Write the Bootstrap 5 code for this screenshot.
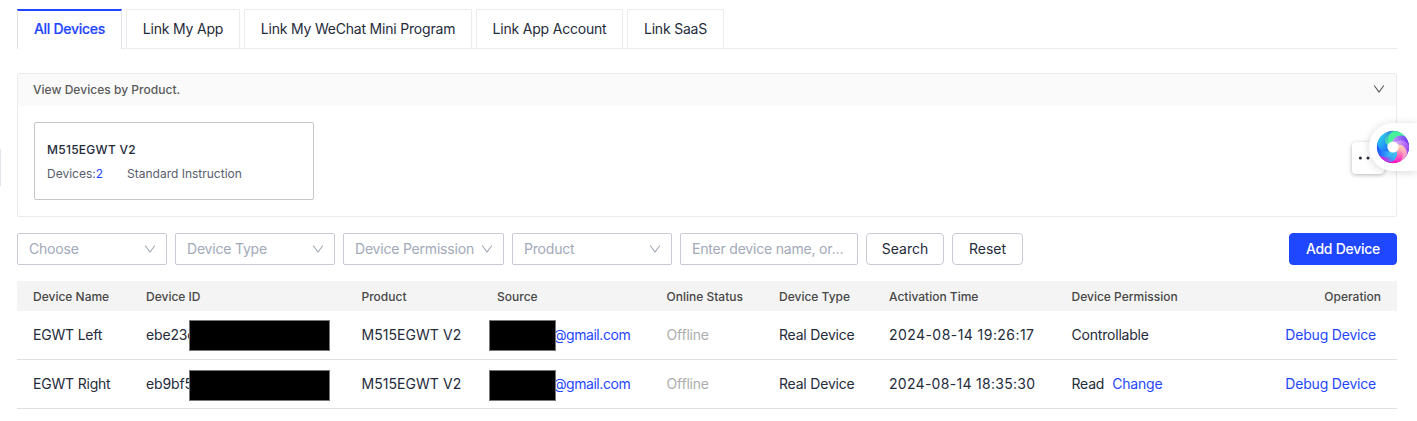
<!DOCTYPE html>
<html lang="en">
<head>
<meta charset="utf-8">
<meta name="viewport" content="width=device-width, initial-scale=1">
<title>Devices</title>
<link href="https://cdn.jsdelivr.net/npm/bootstrap@5.3.0/dist/css/bootstrap.min.css" rel="stylesheet">
<style>
:root { --brand: #1f47ff; --ink: #252b3a; --muted: #a2a9b8; --line: #ebebef; --field: #c8cad4; }
body { font-family: Inter, sans-serif; font-size: 14px; line-height: 22px; letter-spacing: -.2px; color: var(--ink); background: #fff; overflow: hidden; height: 421px; }
.page { padding: 9px 20px 0 17px; }
a { color: var(--brand); text-decoration: none; }
.nav-tabs.device-tabs { gap: 4px; border-bottom: 1px solid var(--line); height: 40px; flex-wrap: nowrap; }
.device-tabs .nav-link { height: 39px; margin: 0; padding: 8px 0 0; border: 1px solid var(--line); border-bottom: 0; border-radius: 2px 2px 0 0; color: var(--ink); text-align: center; white-space: nowrap; }
.device-tabs .nav-link.active { height: 40px; padding-top: 7px; border-top: 2px solid var(--brand); border-radius: 0; color: var(--brand); font-weight: 500; letter-spacing: -.28px; -webkit-text-stroke: .2px; }
.t1 { width: 105px } .t2 { width: 114px } .t3 { width: 228px } .t4 { width: 147px } .t5 { width: 97px }
.panel { margin-top: 24px; height: 144px; border: 1px solid var(--line); border-radius: 2px; }
.panel-head { height: 32px; padding: 0 11px 0 15px; background: #fafafa; font-size: 12px; font-weight: 500; letter-spacing: .03px; color: #595959; }
.product-box { width: 280px; height: 78px; margin: 16px 0 0 16px; padding: 16px 12px; border: 1px solid #c6c6ca; border-radius: 2px; font-size: 12px; letter-spacing: 0; }
.product-box strong { font-weight: 500; display: block; line-height: 22px; letter-spacing: .27px; }
.product-box div { color: #575d6c; line-height: 26px; }
.filters { margin-top: 16px; gap: 8px; }
.field { height: 32px; padding: 0 10px 0 11px; border: 1px solid var(--field); border-radius: 2px; color: var(--muted); white-space: nowrap; }
.f1 { width: 150px } .f2 { width: 160px } .f3 { width: 161px } .f4 { width: 160px } .f5 { width: 178px }
.filters .btn { height: 32px; padding: 0; font-size: 14px; line-height: 30px; border-radius: 4px; border-color: var(--field); color: var(--ink); }
.filters .btn-brand { width: 108px; background: var(--brand); border-color: var(--brand); color: #fff; font-weight: 500; letter-spacing: -.27px; }
.b1 { width: 78px } .b2 { width: 71px }
.device-table { table-layout: fixed; width: 1380px; margin: 16px 0 0; border-collapse: separate; border-spacing: 0; color: var(--ink); white-space: nowrap; }
.device-table th { height: 30px; padding: 1px 16px 0; background: #f4f4f4; font-size: 12px; font-weight: 500; letter-spacing: 0; color: #474747; border: 0; vertical-align: middle; line-height: 22px; }
.device-table td { height: 49px; padding: 0 16px; border-bottom: 1px solid #e0e0e0; vertical-align: middle; position: relative; background: none; color: inherit; }
.device-table td.offline { color: #adadad; }
.device-table td.op { padding-right: 21px; }
.device-table td.model { letter-spacing: .05px; }
.device-table td.ident { letter-spacing: -.15px; }
.device-table td.stamp { letter-spacing: .44px; }
.device-table tr + tr td.stamp { letter-spacing: .29px; }
.mail { margin-left: 56px; letter-spacing: -.45px; }
.redact { position: absolute; top: 9px; height: 31px; background: #000; border: 1px solid #777; }
tr + tr .redact { top: 10px; }
.redact-id { left: 59px; width: 141px; }
.redact-src { left: 8px; width: 67px; }
.more-btn { position: absolute; left: 1352px; top: 142px; width: 32px; height: 32px; padding: 0; border-radius: 4px; background: #fff; box-shadow: 0 1px 4px rgba(0,0,0,.3); }
.helper { position: absolute; left: 1369px; top: 123px; width: 48px; height: 48px; border-radius: 24px 0 0 24px; background: #fff; box-shadow: 0 1px 8px rgba(0,0,0,.16); }
.drawer-edge { position: absolute; left: 0; top: 149px; width: 1px; height: 37px; background: #e4e5ec; }
</style>
</head>
<body class="position-relative">
<main class="page">
  <ul class="nav nav-tabs device-tabs">
    <li class="nav-item"><a class="nav-link active t1" href="#">All Devices</a></li>
    <li class="nav-item"><a class="nav-link t2" href="#">Link My App</a></li>
    <li class="nav-item"><a class="nav-link t3" href="#">Link My WeChat Mini Program</a></li>
    <li class="nav-item"><a class="nav-link t4" href="#">Link App Account</a></li>
    <li class="nav-item"><a class="nav-link t5" href="#">Link SaaS</a></li>
  </ul>

  <section class="panel">
    <div class="panel-head d-flex justify-content-between align-items-center">
      <span>View Devices by Product.</span>
      <svg width="12" height="10" viewBox="0 0 12 10" fill="none" stroke="#555" stroke-width="1.1"><path d="M1.2 .5 6 7.1 10.8 .5"/></svg>
    </div>
    <div class="product-box">
      <strong>M515EGWT V2</strong>
      <div class="d-flex"><span>Devices:<a href="#">2</a></span><span class="ms-4">Standard Instruction</span></div>
    </div>
  </section>

  <div class="filters d-flex">
    <div class="field f1 d-flex justify-content-between align-items-center">Choose<svg width="12" height="10" viewBox="0 0 12 10" fill="none" stroke="#a2a9b8" stroke-width="1.1"><path d="M1.2 1.5 6 8.1 10.8 1.5"/></svg></div>
    <div class="field f2 d-flex justify-content-between align-items-center">Device Type<svg width="12" height="10" viewBox="0 0 12 10" fill="none" stroke="#a2a9b8" stroke-width="1.1"><path d="M1.2 1.5 6 8.1 10.8 1.5"/></svg></div>
    <div class="field f3 d-flex justify-content-between align-items-center">Device Permission<svg width="12" height="10" viewBox="0 0 12 10" fill="none" stroke="#a2a9b8" stroke-width="1.1"><path d="M1.2 1.5 6 8.1 10.8 1.5"/></svg></div>
    <div class="field f4 d-flex justify-content-between align-items-center">Product<svg width="12" height="10" viewBox="0 0 12 10" fill="none" stroke="#a2a9b8" stroke-width="1.1"><path d="M1.2 1.5 6 8.1 10.8 1.5"/></svg></div>
    <div class="field f5 d-flex align-items-center">Enter device name, or…</div>
    <button class="btn b1" type="button">Search</button>
    <button class="btn b2" type="button">Reset</button>
    <button class="btn btn-brand ms-auto" type="button">Add Device</button>
  </div>

  <table class="table device-table">
    <colgroup><col style="width:113px"><col style="width:215.5px"><col style="width:135.5px"><col style="width:169.5px"><col style="width:112.5px"><col style="width:110px"><col style="width:182.5px"><col style="width:171px"><col></colgroup>
    <thead>
      <tr><th>Device Name</th><th>Device ID</th><th>Product</th><th>Source</th><th>Online Status</th><th>Device Type</th><th>Activation Time</th><th>Device Permission</th><th class="text-end">Operation</th></tr>
    </thead>
    <tbody>
      <tr><td>EGWT Left</td><td class="ident">ebe23c<span class="redact redact-id"></span></td><td class="model">M515EGWT V2</td><td><a class="mail" href="#">@gmail.com</a><span class="redact redact-src"></span></td><td class="offline">Offline</td><td>Real Device</td><td class="stamp">2024-08-14 19:26:17</td><td>Controllable</td><td class="text-end op"><a href="#">Debug Device</a></td></tr>
      <tr><td>EGWT Right</td><td class="ident">eb9bf5<span class="redact redact-id"></span></td><td class="model">M515EGWT V2</td><td><a class="mail" href="#">@gmail.com</a><span class="redact redact-src"></span></td><td class="offline">Offline</td><td>Real Device</td><td class="stamp">2024-08-14 18:35:30</td><td>Read<a class="ms-2" href="#">Change</a></td><td class="text-end op"><a href="#">Debug Device</a></td></tr>
    </tbody>
  </table>
</main>
<span class="drawer-edge"></span>
<button class="btn more-btn border-0" type="button" aria-label="More"><svg class="d-block" width="32" height="32" viewBox="0 0 32 32" fill="#252b3a"><circle cx="8.4" cy="16" r="1.5"/><circle cx="16" cy="16" r="1.5"/><circle cx="23.6" cy="16" r="1.5"/></svg></button>
<div class="helper">
  <svg class="d-block" width="48" height="48" viewBox="-24 -24 48 48">
    <defs>
      <path id="blade" d="M0-5A9 9 0 0 1 13.9-8A16 16 0 0 1 14.5 6.8A10 10 0 0 0 4.3-2.5Z"/>
      <linearGradient id="g1"><stop offset="0" stop-color="#c9a6ff"/><stop offset="1" stop-color="#7434f5"/></linearGradient>
      <linearGradient id="g2"><stop offset="0" stop-color="#d8b0ff"/><stop offset="1" stop-color="#a040f0"/></linearGradient>
      <linearGradient id="g3"><stop offset="0" stop-color="#ffd8ae"/><stop offset="1" stop-color="#f58fc8"/></linearGradient>
      <linearGradient id="g4"><stop offset="0" stop-color="#ffc6ae"/><stop offset="1" stop-color="#ff0ac4"/></linearGradient>
      <linearGradient id="g5"><stop offset="0" stop-color="#46c8f0"/><stop offset=".55" stop-color="#38a8f5"/><stop offset="1" stop-color="#e010e0"/></linearGradient>
      <linearGradient id="g6"><stop offset="0" stop-color="#44d0f0"/><stop offset="1" stop-color="#1e52ff"/></linearGradient>
      <linearGradient id="g7"><stop offset="0" stop-color="#1f68ff"/><stop offset="1" stop-color="#28c8ec"/></linearGradient>
      <linearGradient id="g8"><stop offset="0" stop-color="#48f0a0"/><stop offset="1" stop-color="#2f86f0"/></linearGradient>
    </defs>
    <circle r="16" fill="#3a7bf5"/>
    <use href="#blade" fill="url(#g8)" transform="rotate(-80)"/>
    <use href="#blade" fill="#48f09a" transform="rotate(-55)"/>
    <use href="#blade" fill="url(#g1)" transform="rotate(-10)"/>
    <use href="#blade" fill="url(#g2)" transform="rotate(25)"/>
    <use href="#blade" fill="url(#g3)" transform="rotate(60)"/>
    <use href="#blade" fill="url(#g4)" transform="rotate(92)"/>
    <use href="#blade" fill="url(#g5)" transform="rotate(135)"/>
    <use href="#blade" fill="url(#g6)" transform="rotate(180)"/>
    <use href="#blade" fill="url(#g7)" transform="rotate(222)"/>
    <circle r="5.6" fill="#fff"/>
  </svg>
</div>
<script src="https://cdn.jsdelivr.net/npm/bootstrap@5.3.0/dist/js/bootstrap.bundle.min.js"></script>
</body>
</html>
